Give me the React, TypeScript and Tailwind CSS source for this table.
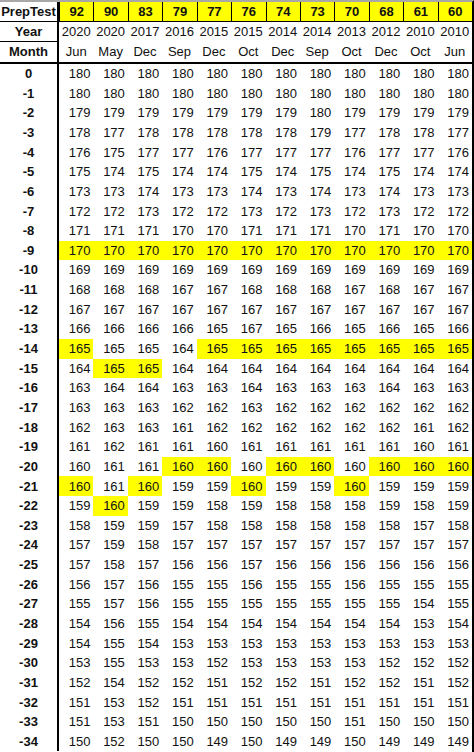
import * as React from 'react';

const tests = ['92', '90', '83', '79', '77', '76', '74', '73', '70', '68', '61', '60'];
const years = ['2020', '2020', '2017', '2016', '2015', '2015', '2014', '2014', '2013', '2012', '2010', '2010'];
const months = ['Jun', 'May', 'Dec', 'Sep', 'Dec', 'Oct', 'Dec', 'Sep', 'Oct', 'Dec', 'Oct', 'Jun'];

// raw score -> scaled score, one line per "missed" count; * marks a highlighted cell
const rows: string[] = [
  '180 180 180 180 180 180 180 180 180 180 180 180',
  '180 180 180 180 180 180 180 180 180 180 180 180',
  '179 179 179 179 179 179 179 180 179 179 179 179',
  '178 177 178 178 178 178 178 179 177 178 178 177',
  '176 175 177 177 176 177 177 177 176 177 177 176',
  '175 174 175 174 174 175 174 175 174 175 174 174',
  '173 173 174 173 173 174 173 174 173 174 173 173',
  '172 172 173 172 172 173 172 173 172 173 172 172',
  '171 171 171 170 170 171 171 171 170 171 170 170',
  '170* 170* 170* 170* 170* 170* 170* 170* 170* 170* 170* 170*',
  '169 169 169 169 169 169 169 169 169 169 169 169',
  '168 168 168 167 167 168 168 168 167 168 167 167',
  '167 167 167 167 167 167 167 167 167 167 167 167',
  '166 166 166 166 165 167 165 166 165 166 165 166',
  '165* 165 165 164 165* 165* 165* 165* 165* 165* 165* 165*',
  '164 165* 165* 164 164 164 164 164 164 164 164 164',
  '163 164 164 163 163 164 163 163 163 164 163 163',
  '163 163 163 162 162 163 162 162 162 162 162 162',
  '162 163 163 161 162 162 162 162 162 162 161 162',
  '161 162 161 161 160 161 161 161 161 161 160 161',
  '160 161 161 160* 160* 160 160* 160* 160 160* 160* 160*',
  '160* 161 160* 159 159 160* 159 159 160* 159 159 159',
  '159 160* 159 159 158 159 158 158 158 159 158 159',
  '158 159 159 157 158 158 158 158 158 158 157 158',
  '157 159 158 157 157 157 157 157 157 157 157 157',
  '157 158 157 156 156 157 156 156 156 156 156 156',
  '156 157 156 155 155 156 155 155 156 155 155 155',
  '155 157 156 155 155 155 155 155 155 155 154 155',
  '154 156 155 154 154 154 154 154 154 154 153 154',
  '154 155 154 153 153 153 153 153 153 153 153 153',
  '153 155 153 153 152 153 153 153 153 152 152 152',
  '152 154 152 152 151 152 152 151 152 152 151 152',
  '151 153 152 151 151 151 151 151 151 151 151 151',
  '151 153 151 150 150 150 150 150 151 150 150 150',
  '150 152 150 150 149 150 149 149 150 149 149 149',
];

export default function App() {
  return (
    <div className="w-[474px] h-[752px] overflow-hidden bg-white border-t-2 border-[#a8a8a8] border-r-2 border-r-black font-['Liberation_Sans',Arial,sans-serif] text-[13px] text-[#111]">
      <div className="grid grid-cols-[59px_repeat(12,minmax(0,1fr))]">
        <div className="h-[20px] flex items-center justify-center font-bold border-r-2 border-b border-black">PrepTest</div>
        {tests.map((t, i) => (
          <div key={i} className="h-[20px] flex items-center justify-center font-bold bg-[#ffff00] border-l border-b border-black first:border-l-0">
            {t}
          </div>
        ))}

        <div className="h-[20px] flex items-center justify-center font-bold border-r-2 border-b border-black">Year</div>
        {years.map((y, i) => (
          <div key={i} className="h-[20px] flex items-center justify-center">{y}</div>
        ))}

        <div className="h-[20px] flex items-center justify-center font-bold border-r-2 border-black">Month</div>
        {months.map((m, i) => (
          <div key={i} className="h-[20px] flex items-center justify-center">{m}</div>
        ))}

        <div className="col-span-13 h-[2px] bg-black" />

        {rows.map((line, r) => (
          <React.Fragment key={r}>
            <div className="h-[19.65px] flex items-center justify-center font-bold border-r-2 border-black">
              {r === 0 ? '0' : `-${r}`}
            </div>
            {line.split(' ').map((v, c) => {
              const hi = v.endsWith('*');
              return (
                <div
                  key={c}
                  className={`h-[19.65px] flex items-center justify-end pr-[3px] ${hi ? 'bg-[#ffff00]' : ''}`}
                >
                  {v.replace('*', '')}
                </div>
              );
            })}
          </React.Fragment>
        ))}
      </div>
    </div>
  );
}
